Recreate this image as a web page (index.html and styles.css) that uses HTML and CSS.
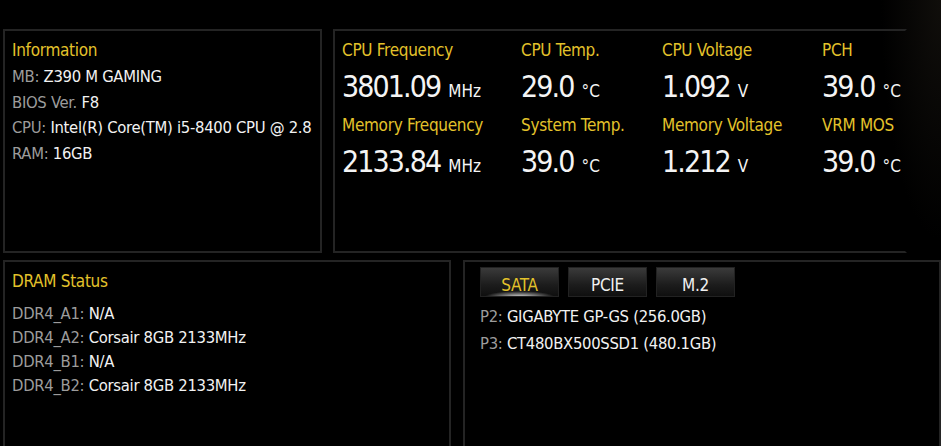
FILE: index.html
```html
<!DOCTYPE html>
<html lang="en">
<head>
  <meta charset="UTF-8">
  <title>System Information</title>
  <link rel="stylesheet" href="styles.css">
</head>
<body>
  <div class="screen">
    <!-- Top row -->
    <div class="row top-row">
      <div class="panel info-panel">
        <div class="title">Information</div>
        <div class="line"><span class="key">MB:</span> Z390 M GAMING</div>
        <div class="line"><span class="key">BIOS Ver.</span> F8</div>
        <div class="line"><span class="key">CPU:</span> Intel(R) Core(TM) i5-8400 CPU @ 2.8</div>
        <div class="line"><span class="key">RAM:</span> 16GB</div>
      </div>

      <div class="panel stats-panel">
        <div class="stat">
          <div class="title">CPU Frequency</div>
          <div class="value">3801.09<span class="unit">MHz</span></div>
        </div>
        <div class="stat">
          <div class="title">CPU Temp.</div>
          <div class="value">29.0<span class="unit">°C</span></div>
        </div>
        <div class="stat">
          <div class="title">CPU Voltage</div>
          <div class="value">1.092<span class="unit">V</span></div>
        </div>
        <div class="stat">
          <div class="title">PCH</div>
          <div class="value">39.0<span class="unit">°C</span></div>
        </div>
        <div class="stat">
          <div class="title">Memory Frequency</div>
          <div class="value">2133.84<span class="unit">MHz</span></div>
        </div>
        <div class="stat">
          <div class="title">System Temp.</div>
          <div class="value">39.0<span class="unit">°C</span></div>
        </div>
        <div class="stat">
          <div class="title">Memory Voltage</div>
          <div class="value">1.212<span class="unit">V</span></div>
        </div>
        <div class="stat">
          <div class="title">VRM MOS</div>
          <div class="value">39.0<span class="unit">°C</span></div>
        </div>
      </div>
    </div>

    <!-- Bottom row -->
    <div class="row bottom-row">
      <div class="panel dram-panel">
        <div class="title">DRAM Status</div>
        <div class="line"><span class="key">DDR4_A1:</span> N/A</div>
        <div class="line"><span class="key">DDR4_A2:</span> Corsair 8GB 2133MHz</div>
        <div class="line"><span class="key">DDR4_B1:</span> N/A</div>
        <div class="line"><span class="key">DDR4_B2:</span> Corsair 8GB 2133MHz</div>
      </div>

      <div class="panel storage-panel">
        <div class="tabs">
          <div class="tab active">SATA</div>
          <div class="tab">PCIE</div>
          <div class="tab">M.2</div>
        </div>
        <div class="line"><span class="key">P2:</span> GIGABYTE GP-GS (256.0GB)</div>
        <div class="line"><span class="key">P3:</span> CT480BX500SSD1 (480.1GB)</div>
      </div>
    </div>
  </div>
</body>
</html>
```

FILE: styles.css
```css
body {
  margin: 0;
  background-color: #000;
  font-family: "DejaVu Sans Condensed", "DejaVu Sans", sans-serif;
  font-stretch: condensed;
  color: #f2f2f2;
  overflow: hidden;
}

.screen {
  width: 941px;
  height: 446px;
  padding: 29px 0 0 3px;
  box-sizing: border-box;
  background: radial-gradient(ellipse 60px 240px at 100% 0%, #100e0b 0%, #000 100%);
}

.row {
  display: flex;
}

.top-row {
  gap: 11px;
}

.bottom-row {
  gap: 12px;
  margin-top: 7px;
}

.panel {
  border: 2px solid #242424;
  box-sizing: border-box;
}

.title {
  color: #e3c22b;
  font-size: 17px;
  letter-spacing: -0.3px;
  line-height: 25px;
}

.line {
  font-size: 16.5px;
  letter-spacing: -0.3px;
  line-height: 25px;
  white-space: nowrap;
}

.key {
  color: #9c9c9c;
}

/* Information */
.info-panel {
  width: 319px;
  height: 224px;
  padding: 7px 0 0 7px;
  overflow: hidden;
}

.info-panel .title {
  margin-bottom: 1px;
}

.info-panel .line {
  line-height: 25.7px;
}

/* Sensors */
.stats-panel {
  width: 574px;
  height: 224px;
  padding: 7px 0 0 7px;
  border-right-color: transparent;
  display: grid;
  grid-template-columns: 179px 141px 160px 1fr;
  grid-auto-rows: 75px;
  align-content: start;
}

.value {
  font-size: 30px;
  letter-spacing: -1.9px;
  line-height: 48px;
  color: #f4f4f4;
}

.unit {
  font-size: 17px;
  letter-spacing: 0;
  margin-left: 8px;
}

/* DRAM */
.dram-panel {
  width: 448px;
  height: 190px;
  padding: 7px 0 0 7px;
}

.dram-panel .title {
  margin-bottom: 8px;
}

.dram-panel .line {
  line-height: 24px;
}

/* Storage */
.storage-panel {
  flex: 1;
  height: 190px;
  padding: 5px 0 0 15px;
}

.tabs {
  display: flex;
  gap: 9px;
  margin-bottom: 6px;
}

.tab {
  width: 79px;
  height: 30px;
  line-height: 36px;
  text-align: center;
  font-size: 17px;
  letter-spacing: -0.3px;
  color: #f0f0f0;
  background: linear-gradient(#3c3c3c, #1c1c1c 60%, #0e0e0e);
  box-shadow: inset 0 0 0 1px #222;
}

.tab.active {
  color: #e3c22b;
  background:
    radial-gradient(ellipse 35px 6px at 50% 100%, rgba(255, 255, 255, 0.85), rgba(255, 255, 255, 0) 100%),
    linear-gradient(#3c3c3c, #1c1c1c 60%, #0e0e0e);
}

.storage-panel .line {
  line-height: 27px;
}
```
